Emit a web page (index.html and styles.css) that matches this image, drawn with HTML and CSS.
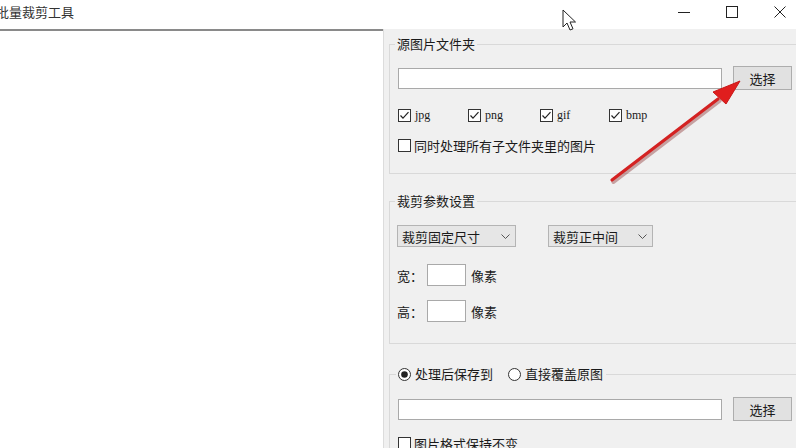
FILE: index.html
```html
<!DOCTYPE html>
<html lang="zh">
<head>
<meta charset="utf-8">
<title>批量裁剪工具</title>
<link rel="stylesheet" href="styles.css">
</head>
<body>
<div class="titlebar">
  <div class="title">批量裁剪工具</div>
  <div class="controls">
    <div class="ctl"><svg width="14" height="14" viewBox="0 0 14 14"><path d="M1 7.5H13" stroke="#222" stroke-width="1"/></svg></div>
    <div class="ctl"><svg width="14" height="14" viewBox="0 0 14 14"><rect x="1.5" y="1.5" width="11" height="11" fill="none" stroke="#222" stroke-width="1"/></svg></div>
    <div class="ctl"><svg width="14" height="14" viewBox="0 0 14 14"><path d="M1.5 1.5L12.5 12.5M12.5 1.5L1.5 12.5" stroke="#222" stroke-width="1"/></svg></div>
  </div>
</div>
<div class="main">
  <div class="left"></div>
  <div class="right">
    <fieldset class="group g1">
      <legend>源图片文件夹</legend>
      <div class="pathrow">
        <div class="textbox wide"></div>
        <div class="btn">选择</div>
      </div>
      <div class="types">
        <div class="chk"><svg class="box" width="13" height="13" viewBox="0 0 13 13"><rect x="0.5" y="0.5" width="12" height="12" fill="#fff" stroke="#333"/><path d="M2.5 6.5L5 9.2L10.5 3.2" fill="none" stroke="#222" stroke-width="1.2"/></svg><span class="latin">jpg</span></div>
        <div class="chk"><svg class="box" width="13" height="13" viewBox="0 0 13 13"><rect x="0.5" y="0.5" width="12" height="12" fill="#fff" stroke="#333"/><path d="M2.5 6.5L5 9.2L10.5 3.2" fill="none" stroke="#222" stroke-width="1.2"/></svg><span class="latin">png</span></div>
        <div class="chk"><svg class="box" width="13" height="13" viewBox="0 0 13 13"><rect x="0.5" y="0.5" width="12" height="12" fill="#fff" stroke="#333"/><path d="M2.5 6.5L5 9.2L10.5 3.2" fill="none" stroke="#222" stroke-width="1.2"/></svg><span class="latin">gif</span></div>
        <div class="chk"><svg class="box" width="13" height="13" viewBox="0 0 13 13"><rect x="0.5" y="0.5" width="12" height="12" fill="#fff" stroke="#333"/><path d="M2.5 6.5L5 9.2L10.5 3.2" fill="none" stroke="#222" stroke-width="1.2"/></svg><span class="latin">bmp</span></div>
      </div>
      <div class="chk sub"><svg class="box" width="13" height="13" viewBox="0 0 13 13"><rect x="0.5" y="0.5" width="12" height="12" fill="#fff" stroke="#333"/></svg><span>同时处理所有子文件夹里的图片</span></div>
    </fieldset>

    <fieldset class="group g2">
      <legend>裁剪参数设置</legend>
      <div class="selects">
        <div class="combo c1"><span>裁剪固定尺寸</span><svg width="9" height="5" viewBox="0 0 9 5"><path d="M0.5 0.5L4.5 4.5L8.5 0.5" fill="none" stroke="#555" stroke-width="1"/></svg></div>
        <div class="combo c2"><span>裁剪正中间</span><svg width="9" height="5" viewBox="0 0 9 5"><path d="M0.5 0.5L4.5 4.5L8.5 0.5" fill="none" stroke="#555" stroke-width="1"/></svg></div>
      </div>
      <div class="dim first"><span class="dlabel">宽：</span><div class="textbox small"></div><span class="unit">像素</span></div>
      <div class="dim second"><span class="dlabel">高：</span><div class="textbox small"></div><span class="unit">像素</span></div>
    </fieldset>

    <fieldset class="group g3">
      <legend>
        <span class="radio"><svg width="13" height="13" viewBox="0 0 13 13"><circle cx="6.5" cy="6.5" r="6" fill="#fff" stroke="#333"/><circle cx="6.5" cy="6.5" r="3.3" fill="#222"/></svg><span>处理后保存到</span></span>
        <span class="radio r2"><svg width="13" height="13" viewBox="0 0 13 13"><circle cx="6.5" cy="6.5" r="6" fill="#fff" stroke="#333"/></svg><span>直接覆盖原图</span></span>
      </legend>
      <div class="pathrow">
        <div class="textbox wide"></div>
        <div class="btn">选择</div>
      </div>
      <div class="chk keep"><svg class="box" width="13" height="13" viewBox="0 0 13 13"><rect x="0.5" y="0.5" width="12" height="12" fill="#fff" stroke="#333"/></svg><span>图片格式保持不变</span></div>
    </fieldset>
  </div>
</div>

<svg class="cursor" width="18" height="24" viewBox="0 0 18 24"><path d="M1 1L1 18L5 14L8 21L11 19.8L8 13L13.5 13Z" fill="#fff" stroke="#222" stroke-width="1" stroke-linejoin="round"/></svg>

<svg class="arrow" width="796" height="448" viewBox="0 0 796 448">
  <g opacity="0.35" transform="translate(1.5,2)">
    <path d="M612 180L718 99" stroke="#7a1010" stroke-width="4" stroke-linecap="round"/>
  </g>
  <path d="M612 180L718 99" stroke="#d42222" stroke-width="3.2" stroke-linecap="round"/>
  <path d="M740 81L713 92L726 104Z" fill="#e01e1e" stroke="#c81818" stroke-width="1" stroke-linejoin="round"/>
</svg>
</body>
</html>
```

FILE: styles.css
```css
html, body {
  margin: 0;
  padding: 0;
}

body {
  width: 796px;
  height: 448px;
  overflow: hidden;
  position: relative;
  background: #ffffff;
  font-family: "Noto Sans CJK SC", "Microsoft YaHei", sans-serif;
  font-size: 13px;
  color: #1a1a1a;
}

.titlebar {
  height: 29px;
  display: flex;
  align-items: center;
}

.title {
  margin-left: -4px;
  font-size: 13px;
  color: #333;
  line-height: 18px;
  margin-top: -5px;
}

.controls {
  margin-left: auto;
  margin-right: -8px;
  display: flex;
  align-self: stretch;
}

.ctl {
  width: 48px;
  display: flex;
  align-items: center;
  justify-content: center;
  margin-top: -6px;
}

.main {
  display: flex;
  height: 419px;
}

.left {
  width: 383px;
  background: #fff;
  border-top: 2px solid #8a8a8a;
  box-sizing: border-box;
}

.right {
  flex: 1;
  background: #f0f0f0;
  border-left: 1px solid #dcdcdc;
  padding-left: 5px;
  padding-top: 6px;
  overflow: hidden;
  box-sizing: border-box;
}

.group {
  margin: 0;
  padding: 0 0 0 8px;
  width: 440px;
  box-sizing: border-box;
  border: 1px solid #d9d9d9;
}

.group legend {
  padding: 0 2px;
  margin-left: -3px;
  line-height: 18px;
  height: 18px;
}

.g1 { padding-bottom: 20px; }
.g2 { margin-top: 18px; padding-bottom: 21px; }
.g3 { margin-top: 21px; padding-bottom: 20px; }

.pathrow {
  margin-top: 13px;
  display: flex;
  align-items: center;
  height: 24px;
}

.g3 .pathrow { margin-top: 14px; }

.textbox {
  background: #fff;
  border: 1px solid #a9a9a9;
  box-sizing: border-box;
}

.textbox.wide {
  width: 324px;
  height: 21px;
}

.btn {
  margin-left: 11px;
  width: 59px;
  height: 24px;
  box-sizing: border-box;
  border: 1px solid #adadad;
  background: #e1e1e1;
  display: flex;
  align-items: center;
  justify-content: center;
  line-height: 1;
}

.types {
  margin-top: 17px;
  display: grid;
  grid-template-columns: 70px 72px 69px auto;
  height: 16px;
}

.chk {
  display: flex;
  align-items: center;
  height: 16px;
}

.chk .box {
  flex: none;
  margin-right: 3px;
}

.latin {
  font-family: "Liberation Serif", serif;
  font-size: 12px;
  margin-left: 1px;
}

.sub { margin-top: 14px; }
.keep { margin-top: 14px; }

.selects {
  margin-top: 15px;
  display: flex;
  height: 22px;
  margin-left: -1px;
}

.combo {
  height: 22px;
  box-sizing: border-box;
  border: 1px solid #b4b4b4;
  background: #e6e6e6;
  display: flex;
  align-items: center;
  padding: 0 5px 0 4px;
}

.combo span { flex: 1; }
.combo svg { flex: none; }

.c1 { width: 119px; }
.c2 { width: 105px; margin-left: 32px; }

.dim {
  display: flex;
  align-items: center;
  height: 22px;
  margin-left: -1px;
}

.dim.first { margin-top: 17px; }
.dim.second { margin-top: 14px; }

.dlabel { width: 30px; }

.textbox.small {
  width: 39px;
  height: 22px;
}

.unit { margin-left: 5px; }

.radio {
  display: inline-flex;
  align-items: center;
  vertical-align: top;
  height: 18px;
}

.radio svg { margin-right: 4px; }
.radio.r2 { margin-left: 12px; }

.g3 legend { margin-left: -2px; padding: 0 3px 0 2px; }

.cursor {
  position: absolute;
  left: 562px;
  top: 9px;
}

.arrow {
  position: absolute;
  left: 0;
  top: 0;
  pointer-events: none;
}
```
